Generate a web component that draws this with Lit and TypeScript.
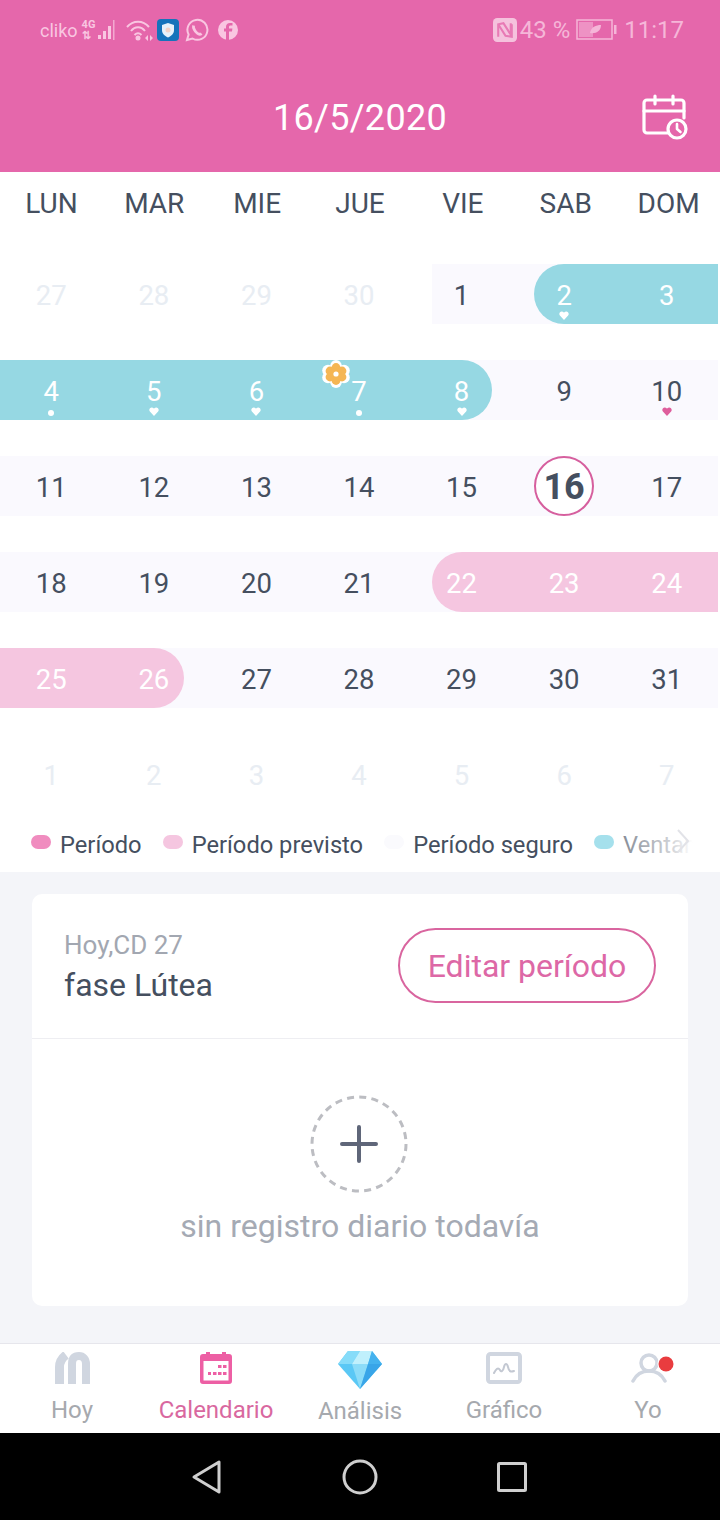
import { LitElement, html, css, svg, nothing } from "lit";
import { customElement } from "lit/decorators.js";

type Tone = "" | "l" | "t" | "p";
interface Cell { n: number; left?: Tone; mid?: Tone; right?: Tone; cap?: "s" | "e"; cls?: string; mark?: "dot" | "heart" | "pink"; flower?: boolean; }

const teal = (n: number, mark?: Cell["mark"], extra: Partial<Cell> = {}): Cell => ({ n, left: "t", mid: "t", right: "t", cls: "on", mark, ...extra });
const pink = (n: number, extra: Partial<Cell> = {}): Cell => ({ n, left: "p", mid: "p", right: "p", cls: "on", ...extra });
const day = (n: number, extra: Partial<Cell> = {}): Cell => ({ n, left: "l", mid: "l", right: "l", ...extra });
const fade = (n: number): Cell => ({ n, cls: "off" });

const ROWS: Cell[][] = [
  [fade(27), fade(28), fade(29), fade(30), day(1, { left: "" }), teal(2, "heart", { left: "l", cap: "s" }), teal(3)],
  [teal(4, "dot"), teal(5, "heart"), teal(6, "heart"), teal(7, "dot", { flower: true }), teal(8, "heart", { right: "l", cap: "e" }), day(9), day(10, { mark: "pink" })],
  [day(11), day(12), day(13), day(14), day(15), day(16, { cls: "today" }), day(17)],
  [day(18), day(19), day(20), day(21), pink(22, { left: "l", cap: "s" }), pink(23), pink(24)],
  [pink(25), pink(26, { right: "l", cap: "e" }), day(27), day(28), day(29), day(30), day(31)],
  [fade(1), fade(2), fade(3), fade(4), fade(5), fade(6), fade(7)],
];
const DAYS = ["LUN", "MAR", "MIE", "JUE", "VIE", "SAB", "DOM"];
const LEGEND: [string, string][] = [["Período", "#F08CBF"], ["Período previsto", "#F5C6E0"], ["Período seguro", "#FAFAFD"], ["Ventana", "#A5E0EC"]];

const heart = svg`<path d="M5 9 L.9 4.6 C-.6 2.6 1 .3 3 .5 C4 .6 4.6 1.1 5 1.8 C5.4 1.1 6 .6 7 .5 C9 .3 10.6 2.6 9.1 4.6 Z"/>`;

@customElement("app-root")
export class AppRoot extends LitElement {
  static styles = css`
    :host { display: block; width: 720px; height: 1520px; overflow: hidden; background: #fff; font-family: Roboto, "Noto Sans", sans-serif; color: #454f5f; }
    .header { height: 172px; background: #e567ab; display: flex; flex-direction: column; }
    .status { height: 60px; padding: 0 36px 0 40px; display: flex; align-items: center; justify-content: space-between; color: #f9c6e1; box-sizing: border-box; }
    .st-l, .st-r { display: flex; align-items: center; }
    .st-l { gap: 4px; font-size: 18px; }
    .st-r { font-size: 24px; gap: 3px; color: #f5b6d8; }
    .net { display: flex; flex-direction: column; font-size: 11px; line-height: 11px; font-weight: 700; width: 14px; }
    .bars { margin-left: -2px; }
    .title { flex: 1; display: grid; grid-template-columns: 1fr auto 1fr; align-items: center; color: #fff; font-size: 36px; letter-spacing: .3px; padding: 0 32px; }
    .title span { grid-column: 2; position: relative; top: 2px; }
    .title svg { justify-self: end; position: relative; top: 1px; }
    .week { height: 62px; display: grid; grid-template-columns: repeat(7, 1fr); width: 720px; align-items: center; text-align: center; font-size: 28px; margin-bottom: 30px; }
    .grid { width: 718px; display: flex; flex-direction: column; gap: 36px; }
    .row { display: grid; grid-template-columns: repeat(7, 1fr); height: 60px; }
    .cell { display: grid; grid-template-columns: 1fr 60px 1fr; position: relative; font-size: 27.5px; }
    .mid { display: flex; align-items: center; justify-content: center; position: relative; padding-top: 3px; box-sizing: border-box; }
    .bg-l { background: #faf9fe; }
    .bg-t { background: #96d8e3; }
    .bg-p { background: #f5c6e0; }
    .cap-s { border-radius: 30px 0 0 30px; }
    .cap-e { border-radius: 0 30px 30px 0; }
    .on { color: #fff; }
    .off { color: #e8edf3; }
    .today { font-size: 36px; font-weight: 700; border: 2px solid #d65f9e; border-radius: 50%; background: #fff; padding-top: 2px; }
    .under { background: #faf9fe; }
    .mark { position: absolute; left: 25px; top: 47px; width: 10px; height: 10px; }
    .dot { width: 6px; height: 6px; left: 27px; top: 50px; border-radius: 50%; background: #fff; }
    .flower { position: absolute; left: -7px; top: 0; }
    .legend { height: 68px; position: relative; overflow: hidden; display: flex; align-items: center; gap: 21px; padding: 14px 0 0 31px; box-sizing: border-box; font-size: 23.7px; white-space: nowrap; }
    .leg { display: flex; align-items: center; gap: 9px; }
    .swatch { width: 20px; height: 14px; border-radius: 7px; position: relative; top: -3px; }
    .fade { position: absolute; top: 0; bottom: 0; left: 622px; right: 0; background: linear-gradient(90deg, rgba(255,255,255,.35), rgba(255,255,255,.75) 50%, #fff 72%); }
    .chev { position: absolute; left: 676px; top: 24px; }
    .main { height: 471px; background: #f4f5f9; padding: 22px 32px 0; box-sizing: border-box; }
    .card { height: 412px; background: #fff; border-radius: 10px; display: flex; flex-direction: column; }
    .card-top { height: 145px; flex: none; box-sizing: border-box; border-bottom: 1px solid #eeeef2; padding: 34px 32px 0 32px; display: flex; justify-content: space-between; align-items: flex-start; }
    .sub { font-size: 26px; color: #a2a7b1; line-height: 34px; }
    .phase { font-size: 32px; line-height: 40px; margin-top: 3px; }
    .edit { width: 258px; height: 75px; box-sizing: border-box; border: 2px solid #d9659f; border-radius: 38px; color: #dd68a6; font-size: 32px; display: flex; align-items: center; justify-content: center; }
    .empty { display: flex; flex-direction: column; align-items: center; padding: 56px 0 0; color: #a5aab4; font-size: 32px; gap: 14px; }
    .empty svg { margin-left: -2px; }
    .nav { height: 89px; border-top: 1px solid #e6e6ec; display: grid; grid-template-columns: repeat(5, 1fr); background: #fff; color: #a6a9ae; font-size: 24px; }
    .tab { display: flex; flex-direction: column; align-items: center; padding-top: 8px; box-sizing: border-box; height: 89px; }
    .ico { height: 38px; display: flex; align-items: flex-start; justify-content: center; }
    .lbl { line-height: 40px; margin-top: 0; }
    .lbl.low { margin-top: 1px; }
    .active { color: #d9689f; }
    .sys { height: 87px; background: #000; display: flex; align-items: center; justify-content: center; gap: 119px; padding-right: 2px; box-sizing: border-box; }
  `;

  private cell(c: Cell) {
    const isToday = c.cls === "today";
    const midBg = c.mid ? `bg-${c.mid}` : "";
    const capCls = c.cap ? `cap-${c.cap}` : "";
    const under = c.cap ? "under" : "";
    const txtCls = isToday ? "" : c.cls ?? "";
    return html`<div class="cell">
      <div class=${c.left ? `bg-${c.left}` : ""}></div>
      <div class=${under + (c.mid === "l" ? " bg-l" : "")}>
        <div class="mid ${midBg} ${capCls} ${txtCls} ${isToday ? "today" : ""}" style="height:60px">
          ${c.n}
          ${c.mark === "dot" ? html`<div class="mark dot"></div>` : nothing}
          ${c.mark === "heart" || c.mark === "pink"
            ? html`<svg class="mark" viewBox="0 0 10 10" fill=${c.mark === "pink" ? "#de5d9c" : "#fff"}>${heart}</svg>`
            : nothing}
          ${c.flower
            ? html`<svg class="flower" width="28" height="28" viewBox="0 0 28 28">
                <g fill="#fff"><circle cx="14" cy="5.8" r="5.8"/><circle cx="22" cy="10.5" r="5.8"/><circle cx="22" cy="17.5" r="5.8"/><circle cx="14" cy="22.2" r="5.8"/><circle cx="6" cy="17.5" r="5.8"/><circle cx="6" cy="10.5" r="5.8"/></g>
                <g fill="#f5b654"><circle cx="14" cy="7.5" r="4.4"/><circle cx="20" cy="11" r="4.4"/><circle cx="20" cy="17" r="4.4"/><circle cx="14" cy="20.5" r="4.4"/><circle cx="8" cy="17" r="4.4"/><circle cx="8" cy="11" r="4.4"/><circle cx="14" cy="14" r="6"/></g>
                <circle cx="14" cy="14" r="2.6" fill="#fff"/></svg>`
            : nothing}
        </div>
      </div>
      <div class=${c.right ? `bg-${c.right}` : ""}></div>
    </div>`;
  }

  render() {
    return html`
      <div class="header">
        <div class="status">
          <div class="st-l">
            <span>cliko</span>
            <div class="net"><span>4G</span><span>⇅</span></div>
            <svg class="bars" width="20" height="24" viewBox="0 0 20 24" fill="#f9c6e1"><rect x="0" y="17" width="3" height="4"/><rect x="5" y="13" width="3" height="8"/><rect x="10" y="8" width="3" height="13"/><rect x="15" y="2" width="1.500" height="20" opacity=".7"/></svg>
            <svg width="28" height="24" viewBox="0 0 28 24" fill="none" stroke="#f9c6e1" stroke-width="2" style="margin-left:4px"><path d="M1 9 C7 2 17 2 23 9"/><path d="M5 13 C9 8 15 8 19 13"/><path d="M8.5 17 C11 14.500 13 14.500 15.500 17"/><circle cx="12" cy="20" r="1.500" fill="#f9c6e1"/><path d="M19 20 l3 -3 v6 z M27 20 l-3 -3 v6 z" fill="#f9c6e1" stroke="none"/></svg>
            <svg width="22" height="22" viewBox="0 0 22 22" style="margin-left:-1px"><rect width="22" height="22" rx="4" fill="#1573bb"/><path d="M11 4 L17 6 V11 C17 15 14 17 11 18.500 C8 17 5 15 5 11 V6 Z" fill="#e6f1fa"/><circle cx="11" cy="11" r="2.500" fill="#f3d3c7"/></svg>
            <svg width="24" height="24" viewBox="0 0 24 24" fill="none" stroke="#f9c6e1" stroke-width="2" style="margin-left:2px"><path d="M2 22 L3.600 16.500 A10 10 0 1 1 7.500 20.500 Z"/><path d="M8.500 7.500 C8 10 10 13.500 12 15 C13.500 16.300 15.500 16.500 16.500 15.500" stroke-width="2.800"/></svg>
            <svg width="22" height="22" viewBox="0 0 22 22" style="margin-left:4px"><circle cx="11" cy="11" r="10" fill="#f9c6e1"/><path d="M12 21 V12.500 H15 L15.400 9.500 H12 V8 C12 7 12.500 6.500 13.500 6.500 H15.500 V4 H13 C10.500 4 9 5.500 9 7.800 V9.500 H7 V12.500 H9 V21 Z" fill="#e567ab"/></svg>
          </div>
          <div class="st-r">
            <svg width="24" height="24" viewBox="0 0 23 23"><rect width="23" height="23" rx="4" fill="#f5c2dd"/><path d="M5 18 V6 L10 5 L17 16 V5 M5 6 L12 17 L18 18 V6" fill="none" stroke="#e87ab5" stroke-width="2"/></svg>
            <span>43 %</span>
            <svg width="41" height="22" viewBox="0 0 41 22" style="margin-left:3px"><rect x="1" y="1" width="35" height="19" fill="none" stroke="#f5b6d8" stroke-width="1.500"/><rect x="3" y="3" width="14" height="15" fill="#f5b6d8" opacity=".55"/><path d="M14 14 C15 8 20 6 25 6 C25 12 20 15 14 14 Z" fill="#f5b6d8"/><rect x="38" y="6" width="2.500" height="9" fill="#f5b6d8"/></svg>
            <span style="margin-left:4px">11:17</span>
          </div>
        </div>
        <div class="title">
          <span>16/5/2020</span>
          <svg width="46" height="46" viewBox="0 0 46 46" fill="none" stroke="#fff" stroke-width="3.200" stroke-linecap="round" stroke-linejoin="round"><path d="M26 39 H5 A3 3 0 0 1 2 36 V9 A3 3 0 0 1 5 6 H39 A3 3 0 0 1 42 9 V24"/><path d="M2 17 H42 M13 2 V10 M31 2 V10"/><circle cx="35" cy="35" r="9"/><path d="M35 30 V35 L38.500 38" stroke-width="2.600"/></svg>
        </div>
      </div>

      <div class="week">${DAYS.map((d) => html`<div>${d}</div>`)}</div>
      <div class="grid">
        ${ROWS.map((r) => html`<div class="row">${r.map((c) => this.cell(c))}</div>`)}
      </div>

      <div class="legend">
        ${LEGEND.map(([t, col]) => html`<div class="leg"><div class="swatch" style="background:${col}"></div><span>${t}</span></div>`)}
        <div class="fade"></div>
        <svg class="chev" width="14" height="26" viewBox="0 0 14 26" fill="none" stroke="#e2e3e8" stroke-width="2"><path d="M2 2 L12 13 L2 24"/></svg>
      </div>

      <div class="main">
        <div class="card">
          <div class="card-top">
            <div><div class="sub">Hoy,CD 27</div><div class="phase">fase Lútea</div></div>
            <div class="edit">Editar período</div>
          </div>
          <div class="empty">
            <svg width="98" height="98" viewBox="0 0 98 98" fill="none"><circle cx="49" cy="49" r="47" stroke="#bcbdc2" stroke-width="3" stroke-dasharray="7 5.300"/><path d="M32 49 H66 M49 32 V66" stroke="#5f6679" stroke-width="4" stroke-linecap="round"/></svg>
            <div>sin registro diario todavía</div>
          </div>
        </div>
      </div>

      <div class="nav">
        <div class="tab">
          <div class="ico"><svg width="36" height="32" viewBox="0 0 36 32" fill="none" stroke="#d0d6e0" stroke-width="8"><path d="M5.500 32 V15 C5.500 9 8 6 12 3" stroke-width="9"/><path d="M18 32 V12 C18 7 20 4 25 4 C29 4 32 7 32 12 V32"/></svg></div>
          <div class="lbl">Hoy</div>
        </div>
        <div class="tab active">
          <div class="ico"><svg width="32" height="32" viewBox="0 0 32 32"><path d="M3 2 H6 V0 H10 V2 H22 V0 H26 V2 H29 A3 3 0 0 1 32 5 V29 A3 3 0 0 1 29 32 H3 A3 3 0 0 1 0 29 V5 A3 3 0 0 1 3 2 Z" fill="#ed5fa4"/><rect x="3.500" y="9" width="25" height="19.500" fill="#fff"/><g fill="#ed5fa4"><rect x="18" y="13" width="3.500" height="3"/><rect x="23" y="13" width="3.500" height="3"/><rect x="8" y="20" width="3" height="3"/><rect x="13" y="20" width="3.500" height="3"/><rect x="18" y="20" width="3.500" height="3"/><rect x="23" y="20" width="3.500" height="3"/></g></svg></div>
          <div class="lbl">Calendario</div>
        </div>
        <div class="tab">
          <div class="ico"><svg width="44" height="38" viewBox="0 0 44 38" style="margin-top:-1px"><polygon points="10,0 34,0 44,13 22,38 0,13" fill="#5ac8f5"/><polygon points="10,0 22,0 14,13 0,13" fill="#86dcf9"/><polygon points="22,0 34,0 30,13 14,13" fill="#c0f0fc"/><polygon points="34,0 44,13 30,13" fill="#45b2ee"/><polygon points="14,13 30,13 22,38" fill="#8cdcf8"/><polygon points="30,13 44,13 22,38" fill="#39a5e8"/></svg></div>
          <div class="lbl low">Análisis</div>
        </div>
        <div class="tab">
          <div class="ico"><svg width="36" height="32" viewBox="0 0 36 32" fill="none" stroke="#d0d6e0"><rect x="2" y="2" width="32" height="28" rx="2.500" stroke-width="4"/><path d="M8 21 C10 17 12 15 14 18 C15 20 17 20 18 15 C19 11 21 11 22 15 C23 20 25 20 28 19" stroke="#c3c8d2" stroke-width="2" stroke-linecap="round"/></svg></div>
          <div class="lbl">Gráfico</div>
        </div>
        <div class="tab">
          <div class="ico"><svg width="44" height="32" viewBox="0 0 44 32" fill="none" stroke="#d0d6e0" stroke-width="3.500" style="margin-left:10px"><circle cx="18" cy="11" r="8"/><path d="M2 29 C6 21 12 19 18 19 C24 19 30 21 34 29" stroke-linecap="round"/><circle cx="35" cy="12" r="8.500" fill="#fff" stroke="none"/><circle cx="35" cy="12" r="7.500" fill="#e93c3f" stroke="none"/></svg></div>
          <div class="lbl">Yo</div>
        </div>
      </div>

      <div class="sys">
        <svg width="32" height="36" viewBox="0 0 32 36" fill="none" stroke="#cfcfcf" stroke-width="3" stroke-linejoin="round"><path d="M28 3 V33 L3 18 Z"/></svg>
        <svg width="36" height="36" viewBox="0 0 36 36" fill="none" stroke="#cfcfcf" stroke-width="3"><circle cx="18" cy="18" r="16"/></svg>
        <svg width="30" height="30" viewBox="0 0 30 30" fill="none" stroke="#cfcfcf" stroke-width="3" stroke-linejoin="round"><rect x="1.500" y="1.500" width="27" height="27" rx="1"/></svg>
      </div>
    `;
  }
}
